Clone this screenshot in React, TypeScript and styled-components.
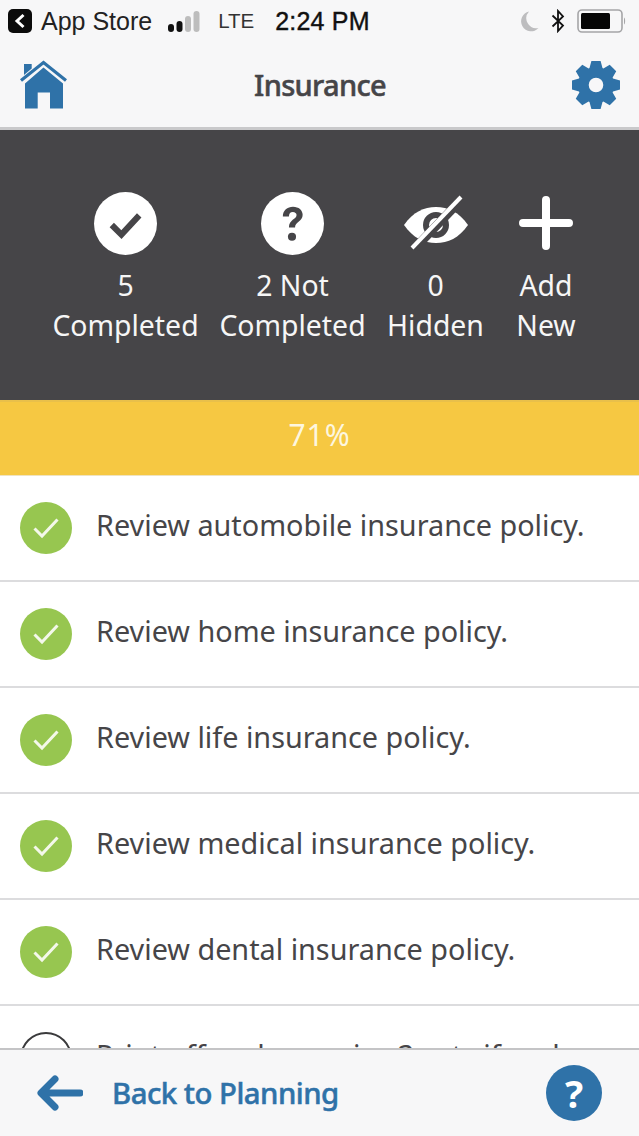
import React from 'react';
import styled, { createGlobalStyle } from 'styled-components';

const Blue = '#2f72a8';
const Dark = '#464548';
const BarGrey = '#f7f7f8';

const GlobalStyle = createGlobalStyle`
  html, body {
    margin: 0;
    padding: 0;
    background: #fff;
  }
  * {
    box-sizing: border-box;
  }
`;

const Page = styled.div`
  width: 639px;
  height: 1136px;
  display: flex;
  flex-direction: column;
  overflow: hidden;
  font-family: 'Noto Sans', sans-serif;
  background: #fff;
`;

const StatusBar = styled.div`
  height: 42px;
  flex: none;
  display: flex;
  align-items: center;
  padding: 0 8px;
  background: ${BarGrey};
  color: #111;
  font: 400 25px 'Liberation Sans', sans-serif;
`;

const BackBadge = styled.div`
  width: 24px;
  height: 24px;
  border-radius: 5px;
  background: #0b0b0b;
  display: flex;
  align-items: center;
  justify-content: center;
  margin-right: 9px;
`;

const Carrier = styled.span`
  color: #222;
  margin-right: 15px;
`;

const Network = styled.span`
  color: #333;
  margin: 0 21px 0 17px;
  font-size: 20.5px;
`;

const Clock = styled.span`
  letter-spacing: 0.2px;
  -webkit-text-stroke: 0.4px #111;
`;

const StatusRight = styled.div`
  margin-left: auto;
  display: flex;
  align-items: center;
  gap: 12px;
  margin-right: 4px;
`;

const NavBar = styled.div`
  height: 85px;
  flex: none;
  display: flex;
  align-items: center;
  justify-content: space-between;
  padding: 0 19px 0 20px;
  background: ${BarGrey};
`;

const NavTitle = styled.div`
  font: 500 29px 'Noto Sans', sans-serif;
  color: ${Dark};
  letter-spacing: -0.7px;
  -webkit-text-stroke: 0.5px ${Dark};
`;

const NavRule = styled.div`
  height: 3px;
  flex: none;
  background: #c9c9cb;
`;

const SummaryPanel = styled.div`
  height: 270px;
  flex: none;
  padding-top: 61px;
  background: ${Dark};
`;

const Stats = styled.div`
  display: grid;
  grid-template-columns: 43px 165px 169px 117px 104px;
`;

const Stat = styled.div`
  display: flex;
  flex-direction: column;
  align-items: center;
  color: #fff;
`;

const StatIcon = styled.div`
  height: 64px;
  display: flex;
  align-items: center;
  justify-content: center;
  margin-bottom: 10px;
`;

const StatLabel = styled.div`
  font: 400 28.4px/40px 'Noto Sans', sans-serif;
  text-align: center;
  white-space: pre;
  color: #f6f6f6;
`;

const Progress = styled.div`
  height: 76px;
  flex: none;
  display: flex;
  align-items: center;
  justify-content: center;
  padding-bottom: 9px;
  background: #f6c842;
  border-top: 2px solid #e9c04a;
  border-bottom: 1px solid #efe3c0;
  color: #fdf6df;
  font: 400 30px 'Noto Sans', sans-serif;
  letter-spacing: 1px;
`;

const List = styled.div`
  flex: 1;
  min-height: 0;
  overflow: hidden;
`;

const Row = styled.div`
  height: 106px;
  display: flex;
  align-items: center;
  padding: 0 0 0 20px;
  border-bottom: 2px solid #dcdcde;
  background: #fff;
`;

const CheckCircle = styled.div<{ $done: boolean }>`
  width: 52px;
  height: 52px;
  flex: none;
  border-radius: 50%;
  display: flex;
  align-items: center;
  justify-content: center;
  margin-right: 24px;
  background: ${(p) => (p.$done ? '#97c650' : '#fff')};
  border: ${(p) => (p.$done ? 'none' : '2px solid #3a3a3c')};
`;

const RowText = styled.div`
  font: 400 28.8px/40px 'Noto Sans', sans-serif;
  color: ${Dark};
  white-space: nowrap;
  padding-bottom: 6px;
`;

const Footer = styled.div`
  height: 88px;
  flex: none;
  display: flex;
  align-items: center;
  padding: 0 37px;
  background: ${BarGrey};
  border-top: 2px solid #c4c4c6;
`;

const BackLabel = styled.div`
  font: 500 29.3px 'Noto Sans', sans-serif;
  color: ${Blue};
  letter-spacing: -0.5px;
  margin-left: 29px;
  -webkit-text-stroke: 0.5px ${Blue};
`;

const HelpButton = styled.div`
  margin-left: auto;
  width: 56px;
  height: 56px;
  border-radius: 50%;
  background: ${Blue};
  color: #fff;
  display: flex;
  align-items: center;
  justify-content: center;
  font: 700 38px 'Noto Sans', sans-serif;
`;

const Signal = () => (
  <svg width="34" height="24" viewBox="0 0 34 24">
    <rect x="1" y="15" width="6" height="8" rx="3" fill="#111" />
    <rect x="9.500" y="12" width="6" height="11" rx="3" fill="#111" />
    <rect x="18" y="7" width="6" height="16" rx="3" fill="#bdbdbd" />
    <rect x="26.500" y="2" width="6" height="21" rx="3" fill="#bdbdbd" />
  </svg>
);

const Moon = () => (
  <svg width="18" height="22" viewBox="0 0 18 22">
    <path d="M8 1.500A10 10 0 0 0 17.500 18 A10 10 0 1 1 8 1.500Z" fill="#bdbdbf" />
  </svg>
);

const Bluetooth = () => (
  <svg width="14" height="24" viewBox="0 0 14 24">
    <path d="M1.500 6.500 12 16.500 7 22V2l5 5.500L1.500 17.500" fill="none" stroke="#111" strokeWidth="1.800" />
  </svg>
);

const Battery = () => (
  <svg width="50" height="24" viewBox="0 0 50 24">
    <rect x="1" y="1" width="44" height="22" rx="4" fill="none" stroke="#a5a5a7" strokeWidth="1.600" />
    <rect x="4" y="4" width="29" height="16" rx="1.500" fill="#050505" />
    <path d="M47 8.500c1.500.6 1.500 6.400 0 7z" fill="#a5a5a7" />
  </svg>
);

const HomeIcon = () => (
  <svg width="48" height="50" viewBox="0 0 48 50">
    <path d="M4 4h7.700v4.500L4 15z" fill={Blue} />
    <path d="M1 20.500 23.500 2.500 46 20.500" fill="none" stroke={Blue} strokeWidth="3.200" />
    <path d="M23.500 7.500 43 23.500V48.500H30V32.500H17.700V48.500H5V23.500z" fill={Blue} />
  </svg>
);

// eight square teeth round a ring, drawn in a 48 box
function gearPath() {
  const points: string[] = [];
  for (let i = 0; i < 8; i++) {
    const a = (i * Math.PI) / 4;
    const along = [
      [17, -6.500],
      [24, -4.600],
      [24, 4.600],
      [17, 6.500],
    ];
    along.forEach(([r, t]) => {
      const x = 24 + r * Math.sin(a) + t * Math.cos(a);
      const y = 24 - r * Math.cos(a) + t * Math.sin(a);
      points.push(`${x.toFixed(2)} ${y.toFixed(2)}`);
    });
  }
  return `M${points.join('L')}Z M24 16.700a7.300 7.300 0 1 0 0 14.600a7.300 7.300 0 1 0 0-14.600Z`;
}

const GearIcon = () => (
  <svg width="48" height="48" viewBox="0 0 48 48">
    <path fill={Blue} fillRule="evenodd" d={gearPath()} />
  </svg>
);

const CheckBadge = () => (
  <svg width="63" height="63" viewBox="0 0 62 62">
    <circle cx="31" cy="31" r="31" fill="#fff" />
    <path d="M17.500 32.500 27 42 44.500 23" fill="none" stroke={Dark} strokeWidth="6" />
  </svg>
);

const QuestionBadge = () => (
  <svg width="63" height="63" viewBox="0 0 62 62">
    <circle cx="31" cy="31" r="31" fill="#fff" />
    <path
      d="M21.500 24c0-6 4.500-9.500 10-9.500 5.700 0 9.500 3.500 9.500 8 0 6.800-7.500 6.800-7.500 12.500h-6c0-8 7.500-8 7.500-12.300 0-1.700-1.500-3-3.700-3-2.300 0-3.800 1.500-3.800 4.300z"
      fill={Dark}
    />
    <circle cx="30.500" cy="44" r="4" fill={Dark} />
  </svg>
);

const HiddenEye = () => (
  <svg width="64" height="56" viewBox="0 0 64 56">
    <path d="M0 30C9 17 20 12 32 12S55 17 64 30C55 43 44 48 32 48S9 43 0 30Z" fill="#fff" />
    <circle cx="32" cy="30" r="10" fill="none" stroke={Dark} strokeWidth="6" />
    <path d="M59 3 11 53" stroke={Dark} strokeWidth="9" />
    <path d="M57 2 8 53" stroke="#fff" strokeWidth="4" />
  </svg>
);

const PlusIcon = () => (
  <svg width="54" height="54" viewBox="0 0 54 54">
    <path d="M27 4v46M4 27h46" stroke="#fff" strokeWidth="8" strokeLinecap="round" />
  </svg>
);

const SmallCheck = () => (
  <svg width="28" height="24" viewBox="0 0 28 24">
    <path d="M2.500 12.500 10 20 25.500 3.500" fill="none" stroke="#f4f8ea" strokeWidth="3" />
  </svg>
);

const BackArrow = () => (
  <svg width="46" height="36" viewBox="0 0 46 36">
    <path d="M43 18H5M18 4 4 18l14 14" fill="none" stroke={Blue} strokeWidth="7" strokeLinecap="round" strokeLinejoin="round" />
  </svg>
);

const stats = [
  { label: '5\nCompleted', icon: <CheckBadge /> },
  { label: '2 Not\nCompleted', icon: <QuestionBadge /> },
  { label: '0\nHidden', icon: <HiddenEye /> },
  { label: 'Add\nNew', icon: <PlusIcon /> },
];

const tasks = [
  { text: 'Review automobile insurance policy.', done: true },
  { text: 'Review home insurance policy.', done: true },
  { text: 'Review life insurance policy.', done: true },
  { text: 'Review medical insurance policy.', done: true },
  { text: 'Review dental insurance policy.', done: true },
  { text: 'Print off and organize 3 sets if and', done: false },
];

export default function App() {
  return (
    <Page>
      <GlobalStyle />
      <StatusBar>
        <BackBadge>
          <svg width="12" height="16" viewBox="0 0 12 16">
            <path d="M9.500 2 3 8l6.500 6" fill="none" stroke="#fff" strokeWidth="3" />
          </svg>
        </BackBadge>
        <Carrier>App Store</Carrier>
        <Signal />
        <Network>LTE</Network>
        <Clock>2:24 PM</Clock>
        <StatusRight>
          <Moon />
          <Bluetooth />
          <Battery />
        </StatusRight>
      </StatusBar>
      <NavBar>
        <HomeIcon />
        <NavTitle>Insurance</NavTitle>
        <GearIcon />
      </NavBar>
      <NavRule />
      <SummaryPanel>
        <Stats>
          <span />
          {stats.map((s) => (
            <Stat key={s.label}>
              <StatIcon>{s.icon}</StatIcon>
              <StatLabel>{s.label}</StatLabel>
            </Stat>
          ))}
        </Stats>
      </SummaryPanel>
      <Progress>71%</Progress>
      <List>
        {tasks.map((t) => (
          <Row key={t.text}>
            <CheckCircle $done={t.done}>{t.done && <SmallCheck />}</CheckCircle>
            <RowText>{t.text}</RowText>
          </Row>
        ))}
      </List>
      <Footer>
        <BackArrow />
        <BackLabel>Back to Planning</BackLabel>
        <HelpButton>?</HelpButton>
      </Footer>
    </Page>
  );
}
